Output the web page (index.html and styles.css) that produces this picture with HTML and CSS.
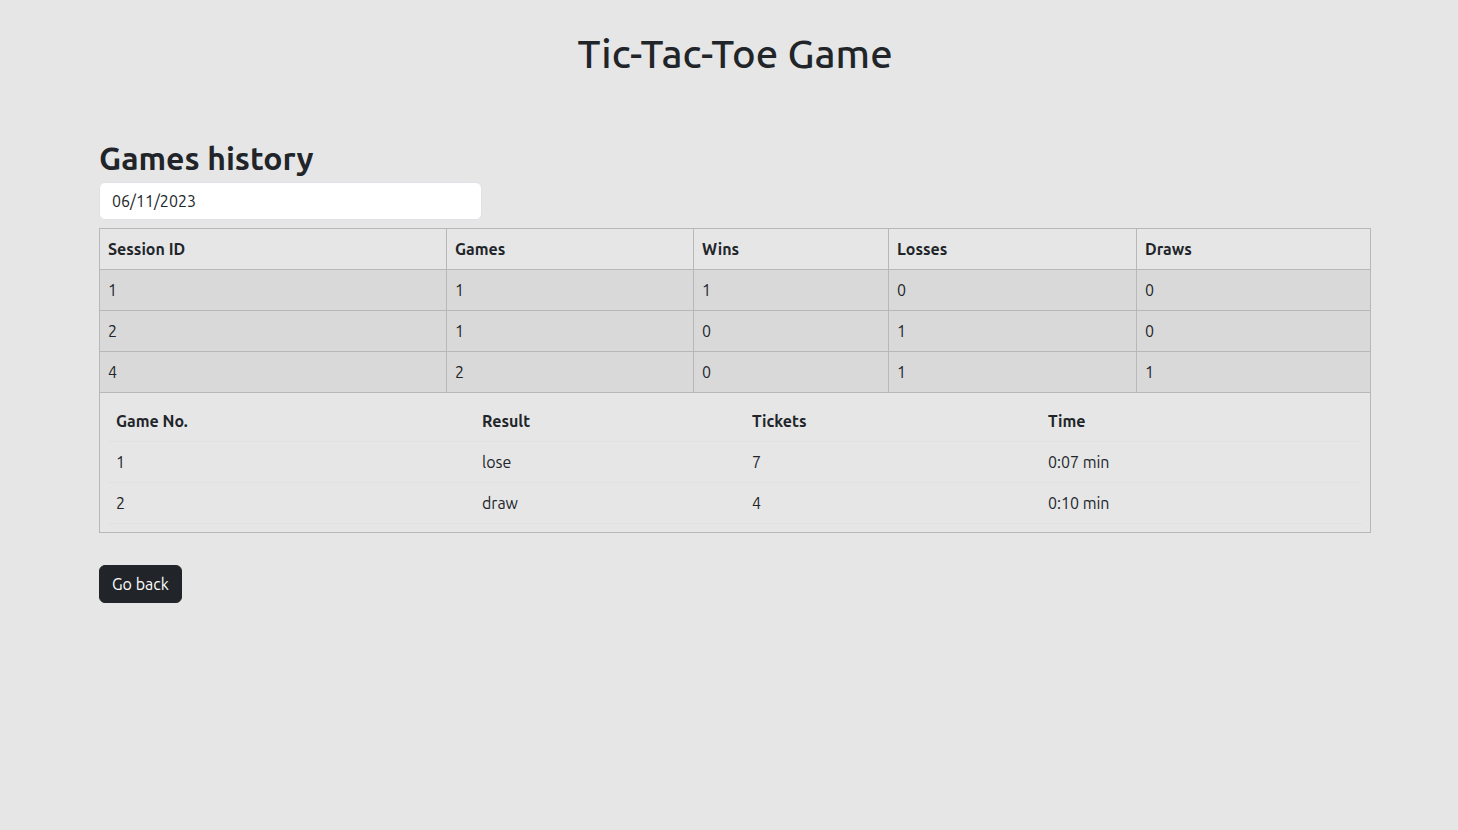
FILE: index.html
```html
<!DOCTYPE html>
<html lang="en">
<head>
<meta charset="utf-8">
<title>Tic-Tac-Toe Game</title>
<link rel="stylesheet" href="styles.css">
</head>
<body>
<div class="page">
  <h1 class="title">Tic-Tac-Toe Game</h1>
  <section class="history">
    <h2 class="history-title">Games history</h2>
    <input class="date-input" type="text" value="06/11/2023">
    <table class="sessions">
      <colgroup>
        <col style="width:347px"><col style="width:247px"><col style="width:195px"><col style="width:248px"><col>
      </colgroup>
      <thead>
        <tr><th>Session ID</th><th>Games</th><th>Wins</th><th>Losses</th><th>Draws</th></tr>
      </thead>
      <tbody>
        <tr class="srow"><td>1</td><td>1</td><td>1</td><td>0</td><td>0</td></tr>
        <tr class="srow"><td>2</td><td>1</td><td>0</td><td>1</td><td>0</td></tr>
        <tr class="srow"><td>4</td><td>2</td><td>0</td><td>1</td><td>1</td></tr>
        <tr class="detail">
          <td colspan="5">
            <table class="games">
              <colgroup>
                <col style="width:366px"><col style="width:270px"><col style="width:296px"><col>
              </colgroup>
              <thead>
                <tr><th>Game No.</th><th>Result</th><th>Tickets</th><th>Time</th></tr>
              </thead>
              <tbody>
                <tr><td>1</td><td>lose</td><td>7</td><td>0:07 min</td></tr>
                <tr><td>2</td><td>draw</td><td>4</td><td>0:10 min</td></tr>
              </tbody>
            </table>
          </td>
        </tr>
      </tbody>
    </table>
    <button class="btn-back" type="button">Go back</button>
  </section>
</div>
</body>
</html>
```

FILE: styles.css
```css
html, body {
  margin: 0;
  padding: 0;
  background: #e6e6e6;
}
body {
  font-family: "Ubuntu", "Noto Sans", "Open Sans", sans-serif;
  font-size: 16px;
  line-height: 1.5;
  color: #212529;
}
.page {
  padding: 30px 87px 0 99px;
}
.title {
  margin: 0;
  font-size: 40px;
  font-weight: 500;
  line-height: 48px;
  text-align: center;
  padding-left: 0;
}
.history {
  margin-top: 61px;
}
.history-title {
  margin: 0 0 5px 0;
  font-size: 32px;
  font-weight: 700;
  line-height: 38px;
}
.date-input {
  display: block;
  box-sizing: border-box;
  width: 383px;
  height: 38px;
  margin: 0 0 8px 0;
  padding: 6px 12px;
  border: 1px solid #dee2e6;
  border-radius: 6px;
  background: #fff;
  font: inherit;
  color: #212529;
}
.sessions {
  width: 1272px;
  border-collapse: collapse;
  table-layout: fixed;
}
.sessions > thead > tr > th,
.sessions > tbody > tr > td {
  border: 1px solid #b8b8b8;
  padding: 8px;
  text-align: left;
  height: 24px;
}
.sessions > thead > tr > th {
  font-weight: 700;
  background: #e6e6e6;
}
.srow > td {
  background: #d9d9d9;
}
.detail > td {
  background: #e6e6e6;
}
.games {
  width: 100%;
  border-collapse: collapse;
  table-layout: fixed;
}
.games th,
.games td {
  padding: 8px;
  text-align: left;
  border-bottom: 1px solid #dfe1e3;
}
.games th {
  font-weight: 700;
}
.btn-back {
  margin-top: 32px;
  height: 38px;
  padding: 6px 12px;
  border: 1px solid #212529;
  border-radius: 6px;
  background: #212529;
  color: #fff;
  font: inherit;
  cursor: pointer;
}
```
